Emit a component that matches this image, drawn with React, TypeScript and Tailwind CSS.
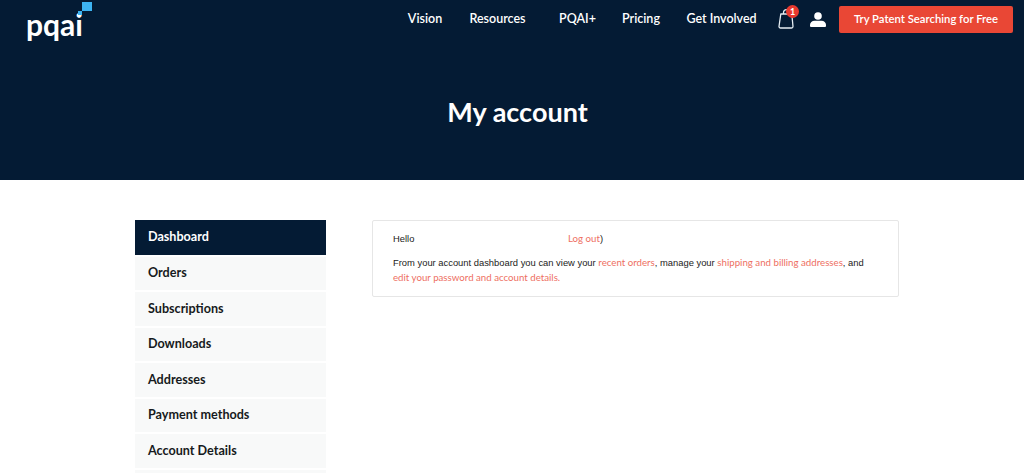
const navItems = [
  { label: "Vision", width: "w-[62px]" },
  { label: "Resources", width: "w-[83px]" },
  { label: "PQAI+", width: "w-[77px]" },
  { label: "Pricing", width: "w-[50px]" },
  { label: "Get Involved", width: "w-[111px]" },
];

const menuItems = ["Orders", "Subscriptions", "Downloads", "Addresses", "Payment methods", "Account Details", ""];

const heading = "font-['Lato','Noto_Sans',sans-serif]";
const link = "font-['Lato','Noto_Sans',sans-serif] text-[9.700px] text-[#ee6f62]";

function Logo() {
  return (
    <div className="relative w-[68px] h-[40px]">
      <span className="absolute left-0 top-[9px] text-white font-bold text-[30px] leading-[30px] font-['Lato',sans-serif]">pqai</span>
      <span className="absolute left-[56px] top-[2px] w-[10px] h-[9px] bg-[#3db4f2]" />
      <span className="absolute left-[52px] top-[11px] w-[4px] h-[4px] bg-[#3db4f2]" />
    </div>
  );
}

function BagIcon() {
  return (
    <div className="relative w-[18px] h-[20px] mr-[14px]">
      <svg width="18" height="20" viewBox="0 0 18 20" fill="none" stroke="#e6eef4" strokeWidth="1.300">
        <path d="M2.800 5h11l1.200 12.500a1.500 1.500 0 0 1-1.500 1.500H2.500a1.500 1.500 0 0 1-1.500-1.500z" strokeLinejoin="round" />
        <path d="M5.500 5V3.500a2.800 2.800 0 0 1 5.600 0V5" />
      </svg>
      <span className={`absolute -top-[4px] left-[8px] w-[13px] h-[13px] rounded-full bg-[#e8392f] text-white text-[9px] font-bold leading-[13px] text-center ${heading}`}>1</span>
    </div>
  );
}

function UserIcon() {
  return (
    <svg width="16" height="15" viewBox="0 0 16 15" fill="white">
      <circle cx="8" cy="4" r="3.800" />
      <path d="M1 15a1 1 0 0 1-1-1v-1c0-2.500 2-4.300 4.500-4.300h7c2.500 0 4.500 1.800 4.500 4.300v1a1 1 0 0 1-1 1z" />
    </svg>
  );
}

export default function App() {
  return (
    <div className="h-[473px] overflow-hidden bg-white">
      <div className="h-[180px] bg-[#041b34] flex flex-col">
        <div className="flex items-start pl-[26px] pr-[11px] h-[40px]">
          <Logo />
          <div className="ml-auto flex items-center h-[38px]">
            {navItems.map((item) => (
              <span key={item.label} className={`${item.width} pt-[1px] text-white text-[12.500px] font-semibold text-center whitespace-nowrap ${heading}`}>
                {item.label}
              </span>
            ))}
            <div className="w-[1px]" />
            <BagIcon />
            <UserIcon />
            <button className={`ml-[13px] w-[174px] h-[27px] rounded-[2px] bg-[#e94735] text-white text-[11.300px] font-semibold whitespace-nowrap ${heading}`}>
              Try Patent Searching for Free
            </button>
          </div>
        </div>
        <h1 className={`mt-[52px] pl-[11px] text-center text-white text-[27px] leading-[40px] font-bold ${heading}`}>My account</h1>
      </div>

      <div className="flex pt-[40px] pl-[135px]">
        <div className="w-[191px] flex flex-col gap-[2px]">
          <div className={`h-[34.500px] pl-[13px] pt-[1px] flex items-center bg-[#041b34] text-white text-[12.600px] font-bold ${heading}`}>Dashboard</div>
          {menuItems.map((item) => (
            <div key={item} className={`h-[33.500px] pl-[13px] pt-[1px] flex items-center bg-[#f8f9f9] text-[#161a20] text-[12.600px] font-bold ${heading}`}>
              {item}
            </div>
          ))}
        </div>
        <div className="ml-[46px] w-[527px] h-[77px] self-start border border-[#e6e6e6] rounded-[2px] pl-[20px] pr-[20px] pt-[10px] font-['Liberation_Sans',Arial,sans-serif] text-[9.400px] leading-[15px] text-[#222]">
          <p className="flex">
            <span className="w-[175px]">Hello</span>
            <span>
              <span className={link}>Log out</span>)
            </span>
          </p>
          <p className="mt-[9px]">
            From your account dashboard you can view your <span className={link}>recent orders</span>, manage your{" "}
            <span className={link}>shipping and billing addresses</span>, and <span className={link}>edit your password and account details.</span>
          </p>
        </div>
      </div>
    </div>
  );
}
